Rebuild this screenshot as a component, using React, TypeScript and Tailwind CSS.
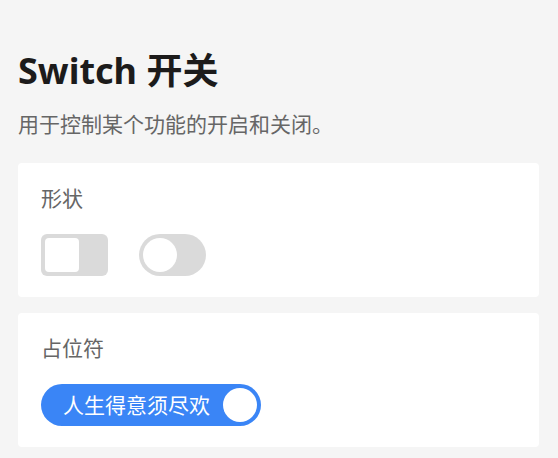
import { useState } from "react";

function SquareSwitch() {
  const [on, setOn] = useState(false);
  return (
    <button
      onClick={() => setOn(!on)}
      className={`flex h-[42px] w-[67px] items-center rounded-[6px] p-1 ${on ? "justify-end bg-[#3a85f6]" : "justify-start bg-[#dadada]"}`}
    >
      <span className="block h-[34px] w-[34px] rounded-[4px] bg-white" />
    </button>
  );
}

function RoundSwitch() {
  const [on, setOn] = useState(false);
  return (
    <button
      onClick={() => setOn(!on)}
      className={`flex h-[42px] w-[67px] items-center rounded-full p-1 ${on ? "justify-end bg-[#3a85f6]" : "justify-start bg-[#dadada]"}`}
    >
      <span className="block h-[34px] w-[34px] rounded-full bg-white" />
    </button>
  );
}

function TextSwitch() {
  const [on, setOn] = useState(true);
  return (
    <button
      onClick={() => setOn(!on)}
      className={`flex h-[42px] w-[220px] items-center rounded-full p-1 ${on ? "bg-[#3a85f6]" : "flex-row-reverse bg-[#dadada]"}`}
    >
      <span className="flex-1 pl-[18px] text-left text-[21px] leading-none text-white">人生得意须尽欢</span>
      <span className="block h-[34px] w-[34px] shrink-0 rounded-full bg-white" />
    </button>
  );
}

function Card({ title, children }: { title: string; children: React.ReactNode }) {
  return (
    <div className="rounded-[4px] bg-white px-[23px] pb-[21px] pt-[19px]">
      <div className="text-[21px] leading-[32px] text-[#666]">{title}</div>
      <div className="mt-[20px] flex items-center gap-[31px]">{children}</div>
    </div>
  );
}

export default function App() {
  return (
    <div
      className="min-h-[458px] bg-[#f5f5f5] pb-4 pl-[18px] pr-[19px] pt-[46px]"
      style={{ fontFamily: '"Noto Sans", "Noto Sans CJK SC", sans-serif' }}
    >
      <h1 className="text-[36px] font-bold leading-[50px] text-[#1c1b1b]">Switch 开关</h1>
      <p className="mt-[13px] text-[21px] leading-[30px] text-[#666]">用于控制某个功能的开启和关闭。</p>
      <div className="mt-[24px] flex flex-col gap-4">
        <Card title="形状">
          <SquareSwitch />
          <RoundSwitch />
        </Card>
        <Card title="占位符">
          <TextSwitch />
        </Card>
      </div>
    </div>
  );
}
